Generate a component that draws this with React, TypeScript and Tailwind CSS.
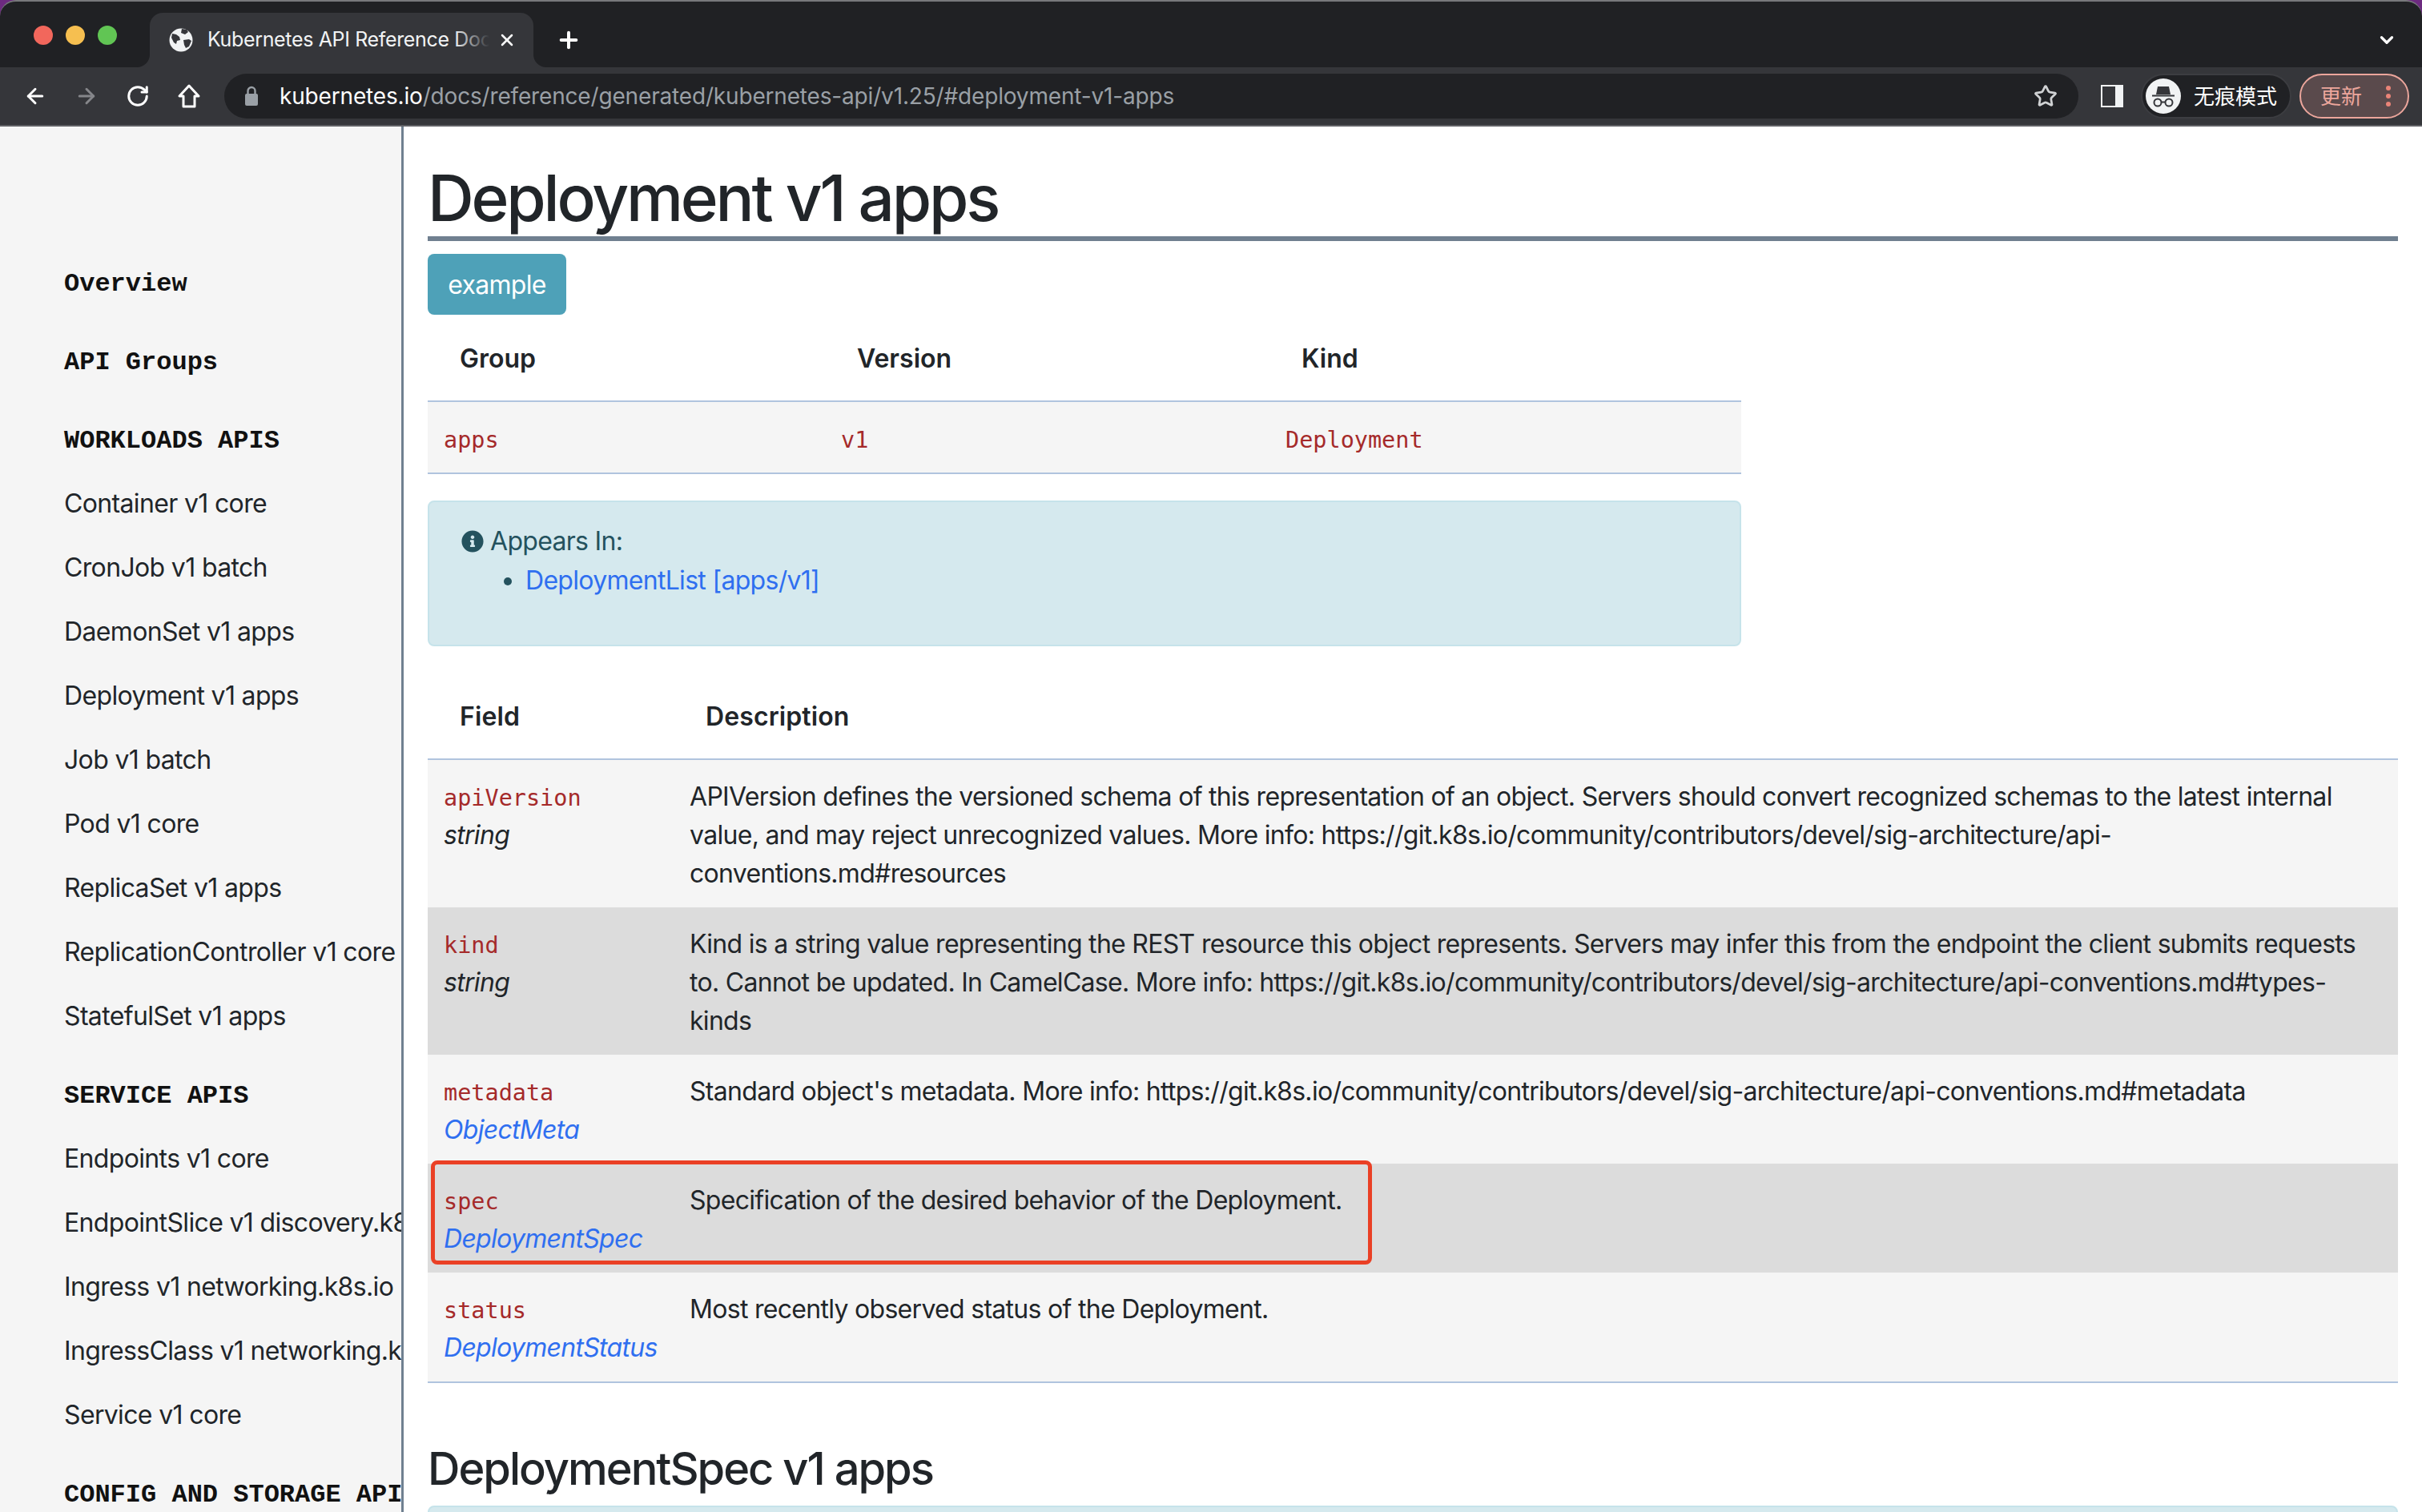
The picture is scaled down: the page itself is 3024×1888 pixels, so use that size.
import { ArrowLeft, ArrowRight, RotateCw, Plus, X, ChevronDown, Star } from 'lucide-react'
import { FaInfoCircle } from 'react-icons/fa'

const sans = "font-['Inter','Noto_Sans_CJK_SC',sans-serif]"

type NavItem = { label: string; head?: boolean }

const nav: NavItem[] = [
  { label: 'Overview', head: true },
  { label: 'API Groups', head: true },
  { label: 'WORKLOADS APIS', head: true },
  { label: 'Container v1 core' },
  { label: 'CronJob v1 batch' },
  { label: 'DaemonSet v1 apps' },
  { label: 'Deployment v1 apps' },
  { label: 'Job v1 batch' },
  { label: 'Pod v1 core' },
  { label: 'ReplicaSet v1 apps' },
  { label: 'ReplicationController v1 core' },
  { label: 'StatefulSet v1 apps' },
  { label: 'SERVICE APIS', head: true },
  { label: 'Endpoints v1 core' },
  { label: 'EndpointSlice v1 discovery.k8s.io' },
  { label: 'Ingress v1 networking.k8s.io' },
  { label: 'IngressClass v1 networking.k8s.io' },
  { label: 'Service v1 core' },
  { label: 'CONFIG AND STORAGE APIS', head: true },
]

type FieldRow = { name: string; type: string; link?: boolean; desc: string; h: string; bg: string }

const fields: FieldRow[] = [
  {
    name: 'apiVersion',
    type: 'string',
    desc: 'APIVersion defines the versioned schema of this representation of an object. Servers should convert recognized schemas to the latest internal value, and may reject unrecognized values. More info: https://git.k8s.io/community/contributors/devel/sig-architecture/api-conventions.md#resources',
    h: 'h-[184px]',
    bg: 'bg-[#f5f5f5]',
  },
  {
    name: 'kind',
    type: 'string',
    desc: 'Kind is a string value representing the REST resource this object represents. Servers may infer this from the endpoint the client submits requests to. Cannot be updated. In CamelCase. More info: https://git.k8s.io/community/contributors/devel/sig-architecture/api-conventions.md#types-kinds',
    h: 'h-[184px]',
    bg: 'bg-[#dcdcdc]',
  },
  {
    name: 'metadata',
    type: 'ObjectMeta',
    link: true,
    desc: "Standard object's metadata. More info: https://git.k8s.io/community/contributors/devel/sig-architecture/api-conventions.md#metadata",
    h: 'h-[136px]',
    bg: 'bg-[#f5f5f5]',
  },
  {
    name: 'spec',
    type: 'DeploymentSpec',
    link: true,
    desc: 'Specification of the desired behavior of the Deployment.',
    h: 'h-[136px]',
    bg: 'bg-[#dcdcdc]',
  },
  {
    name: 'status',
    type: 'DeploymentStatus',
    link: true,
    desc: 'Most recently observed status of the Deployment.',
    h: 'h-[136px]',
    bg: 'bg-[#f5f5f5]',
  },
]

function Globe() {
  return (
    <svg width="30" height="30" viewBox="0 0 30 30">
      <circle cx="15" cy="15" r="14.5" fill="#f1f3f4" />
      <path d="M4 7l5 1 4 3 1 4-4 1-1 4-3-2-3-6z" fill="#35363a" />
      <path d="M16 1l6 1 2 3-4 3-5-2zM18 15l7-1 3 2-3 7-4 2-2-4z" fill="#35363a" />
    </svg>
  )
}

function TabFlare({ side }: { side: 'left' | 'right' }) {
  return (
    <svg
      width="16"
      height="16"
      viewBox="0 0 16 16"
      className={side === 'left' ? 'absolute bottom-0 -left-4' : 'absolute bottom-0 -right-4'}
    >
      <path d={side === 'left' ? 'M16 0v16H0A16 16 0 0 0 16 0z' : 'M0 0v16h16A16 16 0 0 1 0 0z'} fill="#35363a" />
    </svg>
  )
}

function Incognito() {
  return (
    <svg width="44" height="44" viewBox="0 0 44 44">
      <circle cx="22" cy="22" r="22" fill="#f1f3f4" />
      <path d="M15 10h14l2 10H13z" fill="#35363a" />
      <rect x="8" y="20.5" width="28" height="2" fill="#35363a" />
      <circle cx="15" cy="30" r="4.5" fill="none" stroke="#35363a" strokeWidth="2" />
      <circle cx="29" cy="30" r="4.5" fill="none" stroke="#35363a" strokeWidth="2" />
      <path d="M19.5 29.5h5" stroke="#35363a" strokeWidth="2" />
    </svg>
  )
}

function LockIcon() {
  return (
    <svg width="18" height="26" viewBox="0 0 18 26" fill="none">
      <path d="M4.5 11V6.5a4.5 4.5 0 0 1 9 0V11" stroke="#9aa0a6" strokeWidth="2.4" />
      <rect x="1" y="10" width="16" height="15" rx="2" fill="#9aa0a6" />
    </svg>
  )
}

function BrowserChrome() {
  return (
    <div className="rounded-t-[20px] bg-[#202124] border-t-2 border-[#77787b]">
      <div className="flex h-[82px] items-end">
        <div className="flex h-full w-[187px] items-start gap-[16px] pl-[42px] pt-[30px]">
          <span className="h-6 w-6 rounded-full bg-[#f2675c]" />
          <span className="h-6 w-6 rounded-full bg-[#f6bf50]" />
          <span className="h-6 w-6 rounded-full bg-[#61c554]" />
        </div>
        <div className="relative flex h-[68px] w-[479px] items-center rounded-t-[16px] bg-[#35363a] pl-[24px]">
          <TabFlare side="left" />
          <TabFlare side="right" />
          <Globe />
          <div className="relative ml-[18px] w-[352px] overflow-hidden whitespace-nowrap text-[25px] tracking-[-0.35px] text-[#f1f3f4]">
            Kubernetes API Reference Docs
            <span className="absolute inset-y-0 right-0 w-[44px] bg-gradient-to-r from-transparent to-[#35363a]" />
          </div>
          <X size={24} strokeWidth={2.5} className="ml-[10px] text-white" />
        </div>
        <div className="flex h-[68px] items-center pl-[28px]">
          <Plus size={32} strokeWidth={3} className="text-white" />
        </div>
        <div className="flex h-[68px] flex-1 items-center justify-end pr-[31px]">
          <ChevronDown size={26} strokeWidth={3} className="text-white" />
        </div>
      </div>
      <div className="flex h-[74px] items-center border-b-2 border-[#5f6064] bg-[#35363a] pl-[29px] pr-[16px]">
        <ArrowLeft size={30} strokeWidth={2.4} className="text-white" />
        <ArrowRight size={30} strokeWidth={2.4} className="ml-[34px] text-[#85868a]" />
        <RotateCw size={30} strokeWidth={2.4} className="ml-[34px] text-white" />
        <svg width="30" height="32" viewBox="0 0 30 32" className="ml-[34px]" fill="none" stroke="white" strokeWidth="3">
          <path d="M15 3L3 16h5v13h14V16h5z" strokeLinejoin="round" />
        </svg>
        <div className="ml-[29px] flex h-[56px] flex-1 items-center rounded-full bg-[#202124] pl-[25px] pr-[26px]">
          <LockIcon />
          <div className="ml-[26px] flex-1 whitespace-nowrap text-[28px] tracking-[-0.17px] text-[#9aa0a6]">
            <span className="text-white">kubernetes.io</span>/docs/reference/generated/kubernetes-api/v1.25/#deployment-v1-apps
          </div>
          <Star size={30} strokeWidth={2.2} className="text-[#d0d2d4]" />
        </div>
        <div className="ml-[28px] box-border h-[28px] w-[28px] border-y-[2px] border-l-[2px] border-r-[10px] border-[#f1f3f4]" />
        <div className="ml-[22px] flex h-[56px] w-[188px] items-center rounded-full border-2 border-[#3c3d41] bg-[#202124] pl-[4px]">
          <Incognito />
          <span className="ml-[16px] text-[26px] text-white">无痕模式</span>
        </div>
        <div className="ml-[10px] flex h-[56px] w-[137px] items-center rounded-full border-2 border-[#eca69c] bg-[#5a4a4c] pl-[24px]">
          <span className="text-[26px] text-[#eca69c]">更新</span>
          <span className="ml-[30px] flex flex-col gap-[4px]">
            <span className="h-[6px] w-[6px] rounded-full bg-[#ea8478]" />
            <span className="h-[6px] w-[6px] rounded-full bg-[#ea8478]" />
            <span className="h-[6px] w-[6px] rounded-full bg-[#ea8478]" />
          </span>
        </div>
      </div>
    </div>
  )
}

function Sidebar() {
  return (
    <div className="w-[504px] shrink-0 overflow-hidden border-r-[3px] border-[#708090] bg-[#f5f5f5] pl-[80px] pt-[137px]">
      {nav.map((item) =>
        item.head ? (
          <div
            key={item.label}
            className="mt-[18px] flex h-20 items-center whitespace-nowrap pt-[3px] font-['Liberation_Mono',monospace] text-[32px] font-bold text-[#111]"
          >
            {item.label}
          </div>
        ) : (
          <div key={item.label} className="flex h-20 items-center whitespace-nowrap text-[32px] tracking-[-0.65px] text-[#212529]">
            {item.label}
          </div>
        )
      )}
    </div>
  )
}

function Code({ children }: { children: string }) {
  return (
    <div className="-mb-[2px] pt-[2px] font-['DejaVu_Sans_Mono',monospace] text-[28.5px] leading-[48px] tracking-normal text-[#a52a2a]">
      {children}
    </div>
  )
}

function Main() {
  return (
    <div className="min-w-0 flex-1 pl-[30px] pr-[30px] text-[32px] leading-[48px] tracking-[-0.7px] text-[#212529]">
      <h1 className="flex h-[143px] items-end whitespace-nowrap border-b-[6px] border-[#708090] text-[80px] font-medium leading-[96px] tracking-[-3.2px]">
        Deployment v1 apps
      </h1>
      <div className="mt-[16px] flex h-[76px] w-[173px] items-center justify-center rounded-lg bg-[#4ea1b8] pt-[1px] text-white">
        example
      </div>

      <div className="w-[1640px]">
        <div className="flex h-[109px] items-center border-b-2 border-[#b0c4de] pt-[2px] font-semibold tracking-[0px]">
          <div className="w-[496px] pl-[40px]">Group</div>
          <div className="w-[555px] pl-[40px]">Version</div>
          <div className="pl-[40px]">Kind</div>
        </div>
        <div className="flex h-[90px] items-center border-b-2 border-[#b0c4de] bg-[#f5f5f5] pt-[4px]">
          <div className="w-[496px] pl-[20px]"><Code>apps</Code></div>
          <div className="w-[555px] pl-[20px]"><Code>v1</Code></div>
          <div className="pl-[20px]"><Code>Deployment</Code></div>
        </div>
      </div>

      <div className="mt-[33px] h-[182px] w-[1640px] rounded-lg border-2 border-[#c6e3ea] bg-[#d5e9ee] pl-[40px] pt-[25px] text-[#24525e]">
        <div className="flex items-center">
          <FaInfoCircle size={28} className="mr-[8px]" />
          Appears In:
        </div>
        <ul className="mt-[1px] list-disc pl-[80px]">
          <li><span className="text-[#2f6ff0]">DeploymentList [apps/v1]</span></li>
        </ul>
      </div>

      <div className="flex h-[142px] items-end border-b-2 border-[#b0c4de] pb-[28px] font-semibold tracking-[0.1px]">
        <div className="w-[307px] pl-[40px]">Field</div>
        <div className="pl-[40px]">Description</div>
      </div>

      {fields.map((f) => (
        <div key={f.name} className={`flex pt-[22px] ${f.h} ${f.bg}`}>
          <div className="w-[307px] shrink-0 pl-[20px]">
            <Code>{f.name}</Code>
            <div className={f.link ? 'italic text-[#2f6ff0]' : 'italic'}>{f.type}</div>
          </div>
          <div className="pl-[20px] pr-[20px]">{f.desc}</div>
        </div>
      ))}
      <div className="border-b-2 border-[#b0c4de]" />

      <h2 className="mt-[73px] whitespace-nowrap text-[56px] font-medium leading-[68px] tracking-[-2px]">
        DeploymentSpec v1 apps
      </h2>
      <div className="mt-[12px] h-[40px] rounded-lg border-2 border-[#c6e3ea] bg-[#d5e9ee]" />
    </div>
  )
}

export default function App() {
  return (
    <div className={`relative h-[1888px] w-[3024px] overflow-hidden bg-[#6d2a80] ${sans}`}>
      <BrowserChrome />
      <div className="flex h-[1730px] bg-white">
        <Sidebar />
        <Main />
      </div>
      {/* annotation drawn over the spec row */}
      <div className="absolute left-[538px] top-[1449px] h-[130px] w-[1175px] rounded-[8px] border-[5px] border-[#ea4025]" />
    </div>
  )
}
